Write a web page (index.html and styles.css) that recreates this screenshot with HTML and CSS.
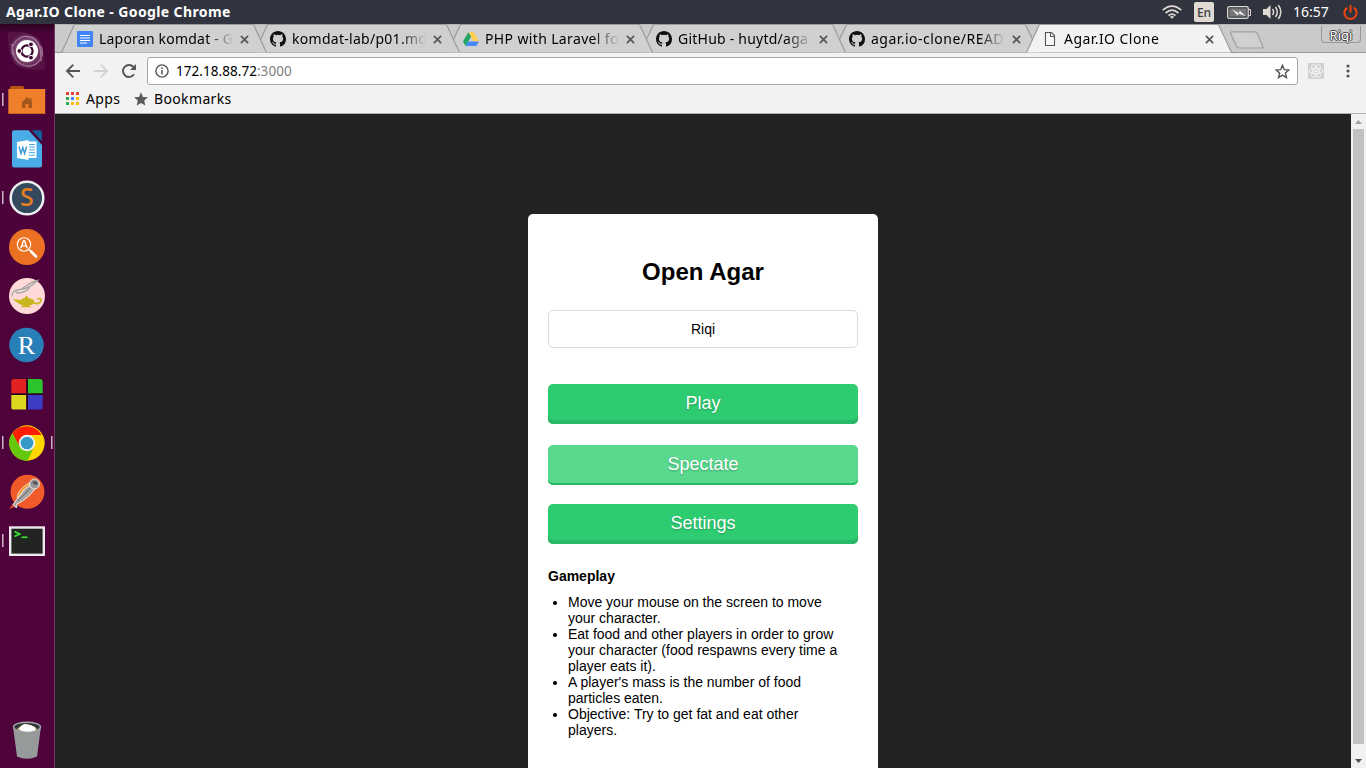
FILE: index.html
```html
<!DOCTYPE html>
<html lang="en">
<head>
<meta charset="utf-8">
<title>Agar.IO Clone</title>
<link rel="stylesheet" href="styles.css">
</head>
<body>
<svg class="defs" width="0" height="0">
  <symbol id="github" viewBox="0 0 16 16"><path fill="#111" d="M8 0C3.58 0 0 3.58 0 8c0 3.54 2.29 6.53 5.47 7.59.4.07.55-.17.55-.38 0-.19-.01-.82-.01-1.49-2.01.37-2.53-.49-2.69-.94-.09-.23-.48-.94-.82-1.13-.28-.15-.68-.52-.01-.53.63-.01 1.08.58 1.23.82.72 1.21 1.87.87 2.33.66.07-.52.28-.87.51-1.07-1.78-.2-3.64-.89-3.64-3.95 0-.87.31-1.59.82-2.15-.08-.2-.36-1.02.08-2.12 0 0 .67-.21 2.2.82a7.6 7.6 0 0 1 4 0c1.53-1.04 2.2-.82 2.2-.82.44 1.1.16 1.92.08 2.12.51.56.82 1.27.82 2.15 0 3.07-1.87 3.75-3.65 3.95.29.25.54.73.54 1.48 0 1.07-.01 1.93-.01 2.2 0 .21.15.46.55.38A8 8 0 0 0 16 8c0-4.42-3.58-8-8-8z"/></symbol>
  <symbol id="close" viewBox="0 0 9 9"><path d="M.9.9l7.2 7.2M8.1.9L.9 8.1" stroke="#555" stroke-width="1.7"/></symbol>
  <symbol id="tab" viewBox="0 0 206 29"><path d="M.5 28.5L13.5.5H192.500L205.500 28.500" stroke="#999" stroke-width="1.1"/></symbol>
</svg>

<header class="panel">
  <span class="panel-title">Agar.IO Clone - Google Chrome</span>
  <svg class="ind wifi" width="20" height="14" viewBox="0 0 20 14" fill="none" stroke="#dfdbd2" stroke-width="1.7"><path d="M.7 5.200Q10-3 19.300 5.200M3.600 8Q10 2.400 16.400 8M6.500 10.600Q10 7.600 13.500 10.600"/><path d="M7.800 11.700Q10 10.200 12.200 11.700L10 13.800z" fill="#dfdbd2" stroke="none"/></svg>
  <span class="lang">En</span>
  <svg class="ind battery" width="24" height="13" viewBox="0 0 24 13"><rect x=".7" y=".7" width="20.500" height="11.600" rx="1.500" fill="none" stroke="#dfdbd2" stroke-width="1.300"/><rect x="2.300" y="2.300" width="17.400" height="8.400" fill="#77777b"/><path d="M21.500 3.500h2v6h-2" fill="none" stroke="#dfdbd2"/><path d="M5 3.200L12 7.200 12.700 4.600 18.500 10 11.500 7.600 10.500 9.600z" fill="#f4f1ea"/></svg>
  <svg class="ind sound" width="19" height="16" viewBox="0 0 19 16"><path d="M0 5h3.500L7.500 1v14L3.500 11H0z" fill="#dfdbd2"/><path d="M9.500 5q2.200 3 0 6M12.500 3q3.500 5 0 10M15.300 1q5 7 0 14" fill="none" stroke="#dfdbd2" stroke-width="1.500"/></svg>
  <span class="clock">16:57</span>
  <svg class="ind power" width="15" height="15" viewBox="0 0 15 15" fill="none" stroke="#f0440c" stroke-width="2"><path d="M4.300 2.700a6.100 6.100 0 1 0 6.400 0M7.500 0v7.500"/></svg>
</header>

<div class="desktop">
  <nav class="launcher">
    <svg class="app" viewBox="0 0 54 49"><defs><radialGradient id="sw"><stop offset=".45" stop-color="#c9aec4"/><stop offset="1" stop-color="#6d3a62" stop-opacity=".5"/></radialGradient></defs><path d="M8 6Q24 4 38 12Q45 22 45 43Q30 46 16 39Q7 28 8 6z" fill="url(#sw)" opacity=".55"/><path d="M13 29A14 14 0 0 1 30 11Q42 14 41 35M41 20A14 14 0 0 1 23 39Q13 36 12 18" fill="none" stroke="#c9a9c2" stroke-width="1.300" opacity=".6"/><circle cx="27" cy="25" r="11" fill="#fff"/><circle cx="27" cy="25" r="5.600" fill="none" stroke="#3d0630" stroke-width="2.300"/><g stroke="#fff" stroke-width="1" fill="#3d0630"><circle cx="19.300" cy="25" r="2.400"/><circle cx="31" cy="18.300" r="2.400"/><circle cx="31" cy="31.700" r="2.400"/></g></svg>
    <svg class="app" viewBox="0 0 54 49"><path d="M2 18h1.500v13H2z" fill="#c9b8c4"/><path d="M10 14v-1.500q0-1.500 1.500-1.500H22.500q1.500 0 1.500 1.500V14z" fill="#b8540f"/><path d="M8.300 14H45.200V38.600H8.300z" fill="#f07f2c"/><path d="M8.300 38H45.200V39H8.300z" fill="#ca641a"/><path d="M21 28L27 22l2.800 2.700V23h1.700v3.300L33 28h-1v5H28.500V29h-3v4H22V28z" fill="#a3571c"/></svg>
    <svg class="app" viewBox="0 0 54 49"><path d="M14.500 6.300H28.500L42 21V41q0 2.500-2.500 2.500h-25Q12 43.500 12 41V8.800q0-2.500 2.500-2.500z" fill="#4aade8"/><path d="M32 6.300H39.500Q42 6.300 42 8.500V17.500z" fill="#145f9c"/><path d="M27.500 17.500H36.500V34H27.500z" fill="#fff"/><path d="M29 20.500h6M29 23.200h6M29 25.900h6M29 28.600h6M29 31.200h6" stroke="#4aade8" stroke-width="1"/><path d="M17 18L28.500 16V36L17 34z" fill="#fff"/><path d="M19 22.500L21 29.500 22.800 23.500 24.600 29.500 26.600 22.500" fill="none" stroke="#379bd8" stroke-width="1.400"/></svg>
    <svg class="app" viewBox="0 0 54 49"><path d="M2 18h1.500v13H2z" fill="#c9b8c4"/><circle cx="27" cy="25" r="16.300" fill="#34495e" stroke="#edf0f1" stroke-width="2.500"/><text x="27" y="33" class="sublime">S</text></svg>
    <svg class="app" viewBox="0 0 54 49"><circle cx="27" cy="25" r="18" fill="#eb7222"/><circle cx="24" cy="22.500" r="6.700" fill="none" stroke="#fff" stroke-width="1.100"/><path d="M29 27.500L31 29.500" stroke="#fff" stroke-width="1.200"/><path d="M31 29.500L36 34.500" stroke="#fff" stroke-width="2.600" stroke-linecap="round"/><path d="M20.800 26.200L23.500 18.700h1L27.200 26.200M21.800 23.800h4.400" fill="none" stroke="#fff" stroke-width="1.300"/></svg>
    <svg class="app" viewBox="0 0 54 49"><circle cx="27" cy="25" r="18" fill="#ffd9d8"/><path d="M12 25.500Q11.500 19 20 18.500T37.500 9.500Q32 10.500 26 15T14 20.500M16 22Q25 22 28 18T34 13" fill="none" stroke="#a8a9a7" stroke-width="1.300"/><path d="M12.500 28Q17 28.500 20 29Q23.500 27.300 25 26.800Q25 25 26.500 25T28 26.800Q32.500 28 34 29Q35 34 28.500 34.500L32 36.300H20L23.500 34.500Q19 33.500 12.500 28z" fill="#c9b51d"/><path d="M33 31.500Q40 34.500 41 29.500Q41 26.500 37 28" fill="none" stroke="#c9b51d" stroke-width="1.700"/></svg>
    <svg class="app" viewBox="0 0 54 49"><circle cx="26.500" cy="25" r="17.300" fill="#2980b9"/><text x="26.300" y="34.300" class="rstudio">R</text></svg>
    <svg class="app" viewBox="0 0 54 49"><path d="M14 10H26.300V24.500H11.300V13Q11.300 10 14 10z" fill="#e12222"/><path d="M28 10H40Q42.700 10 42.700 13V24.500H28z" fill="#2bc42a"/><path d="M11.300 26H26.300V40.600H14Q11.300 40.600 11.300 38z" fill="#ded71f"/><path d="M28 26H42.700V38Q42.700 40.600 40 40.600H28z" fill="#3c3cc4"/><path d="M27.100 10V40.600M11.300 25.300H42.700" stroke="#25041e" stroke-width="1.500"/></svg>
    <svg class="app" viewBox="0 0 54 49"><path d="M2 18h1.500v13H2zM51 18h1.500v13H51z" fill="#c9b8c4"/><circle cx="27" cy="25" r="17.700" fill="#ffd600"/><path d="M27 25L19.500 29 12.300 15.200A17.700 17.700 0 0 1 41.700 17H27z" fill="#fb1d04"/><path d="M12.300 15.200L20 29 27 25 34 29 27.500 42.700A17.700 17.700 0 0 1 12.300 15.200z" fill="#64c80c"/><circle cx="27" cy="25" r="7.300" fill="#3498c8" stroke="#f1f1f1" stroke-width="1.900"/></svg>
    <svg class="app" viewBox="0 0 54 49"><circle cx="27.500" cy="24.700" r="17" fill="#f15a29"/><path d="M9 42L15 34.500 16 39.500z" fill="#dd4c20"/><path d="M17 31Q18 22 29 16L32 20 19 32z" fill="#f7992d" stroke="#eee" stroke-width=".8"/><path d="M32 17.500Q24 21 21 27L13 37.500 16.500 41 17 37Q29 31 35.500 21z" fill="#a5a5a3" stroke="#f4f0ed" stroke-width="1"/><path d="M30 21Q25 28 17 34" fill="none" stroke="#666" stroke-width="1"/><circle cx="34.500" cy="17" r="5" fill="#999" stroke="#f4f0ed" stroke-width=".9"/><path d="M32 15q4-3 6 2l-3 1z" fill="#555"/></svg>
    <svg class="app" viewBox="0 0 54 49"><path d="M2 18h1.500v13H2z" fill="#c9b8c4"/><rect x="10.200" y="11.500" width="33.600" height="27.300" fill="#222421" stroke="#eee9ee" stroke-width="2.400"/><path d="M14.500 15.500L19.500 18 14.500 20.500" fill="none" stroke="#38e22e" stroke-width="1.900"/><path d="M21.500 21.300H27.500" stroke="#38e22e" stroke-width="1.700"/></svg>
    <svg class="trash" viewBox="0 0 54 49"><path d="M13 9.500L17 39.500Q27 44 37 39.500L41 9.500z" fill="#969a9a"/><ellipse cx="27" cy="10" rx="13.500" ry="4.800" fill="#333838" stroke="#a3a7a7" stroke-width="1.400"/><path d="M17 12l4-3 5-2 9 3 2 2q-9 4.500-20 0z" fill="#e5cf8b"/><path d="M19 13l2-4 3-2 4 .5 4 1 3 2 .5 3q-8 2.500-16.500-.5z" fill="#fff"/></svg>
  </nav>

  <main class="browser">
    <div class="tabstrip">
      <div class="tab t1"><svg class="shape" fill="#d0d0d0"><use href="#tab"/></svg><svg class="fav" viewBox="0 0 16 16"><rect width="16" height="16" rx="1" fill="#4285f4"/><path d="M3 4.500h10M3 7h10M3 9.500h10M3 12h7" stroke="#fff" stroke-width="1.100"/></svg><span class="label">Laporan komdat - G</span><svg class="x"><use href="#close"/></svg></div>
      <div class="tab t2"><svg class="shape" fill="#d0d0d0"><use href="#tab"/></svg><svg class="fav"><use href="#github"/></svg><span class="label">komdat-lab/p01.md</span><svg class="x"><use href="#close"/></svg></div>
      <div class="tab t3"><svg class="shape" fill="#d0d0d0"><use href="#tab"/></svg><svg class="fav" viewBox="0 0 16 16"><path d="M5.400 1.300h5.200L16 10.500h-5.200z" fill="#ffcf48"/><path d="M5.400 1.300L0 10.500 2.700 15 8 5.800z" fill="#1fa463"/><path d="M5.300 10.500H16L13.300 15H2.700z" fill="#4688f4"/></svg><span class="label">PHP with Laravel fo</span><svg class="x"><use href="#close"/></svg></div>
      <div class="tab t4"><svg class="shape" fill="#d0d0d0"><use href="#tab"/></svg><svg class="fav"><use href="#github"/></svg><span class="label">GitHub - huytd/aga</span><svg class="x"><use href="#close"/></svg></div>
      <div class="tab t5"><svg class="shape" fill="#d0d0d0"><use href="#tab"/></svg><svg class="fav"><use href="#github"/></svg><span class="label">agar.io-clone/READ</span><svg class="x"><use href="#close"/></svg></div>
      <div class="tab active"><svg class="shape" fill="#f2f2f2"><use href="#tab"/></svg><svg class="fav" viewBox="0 0 16 16"><path d="M3.500 1.500h6l3 3v10h-9zM8.500 1.500v4h4" fill="#f8f8f8" stroke="#555" stroke-width="1.100"/></svg><span class="label">Agar.IO Clone</span><svg class="x"><use href="#close"/></svg></div>
      <svg class="newtab" width="36" height="19" viewBox="0 0 36 19"><path d="M3 .8H25.500Q27.500.8 28.300 2.500L34 15.500Q34.500 17 33 17H10.500Q8.500 17 7.700 15.500L1.700 2.500Q1.200.8 3 .8z" fill="#d0d0d0" stroke="#a0a0a0" stroke-width="1.200"/></svg>
      <span class="profile">Riqi</span>
    </div>
    <div class="toolbar">
      <svg class="nav" viewBox="0 0 16 16"><path d="M15 8H2.500M8.300 1.700L2 8l6.300 6.300" fill="none" stroke="#555" stroke-width="1.900"/></svg>
      <svg class="nav" viewBox="0 0 16 16"><path d="M1 8H13.500M7.700 1.700L14 8l-6.300 6.300" fill="none" stroke="#d2d2d2" stroke-width="1.900"/></svg>
      <svg class="nav" viewBox="0 0 16 16"><path d="M13 11.300A6 6 0 1 1 12.500 4" fill="none" stroke="#555" stroke-width="1.900"/><path d="M15 1V7H9z" fill="#555"/></svg>
      <div class="omnibox">
        <svg class="info" viewBox="0 0 14 14"><circle cx="7" cy="7" r="6.100" fill="none" stroke="#555" stroke-width="1.400"/><path d="M7 6v4.500M7 3.300v1.600" stroke="#555" stroke-width="1.500"/></svg>
        <span class="url">172.18.88.72<span class="port">:3000</span></span>
        <svg class="star" viewBox="0 0 14 14"><path d="M7 1.200L8.700 5.300 13 5.600 9.700 8.400 10.700 12.700 7 10.400 3.300 12.700 4.300 8.400 1 5.600 5.300 5.300z" fill="none" stroke="#555" stroke-width="1.300"/></svg>
      </div>
      <svg class="react" viewBox="0 0 16 16"><path d="M0 0h16v16H0z" fill="#d0d0d0"/><g fill="none" stroke="#f3f3f3" stroke-width="1"><ellipse cx="8" cy="8" rx="7" ry="2.700"/><ellipse cx="8" cy="8" rx="7" ry="2.700" transform="rotate(60 8 8)"/><ellipse cx="8" cy="8" rx="7" ry="2.700" transform="rotate(120 8 8)"/></g><circle cx="8" cy="8" r="1.400" fill="#f3f3f3"/></svg>
      <svg class="dots" viewBox="0 0 4 14" fill="#555"><circle cx="2" cy="2" r="1.600"/><circle cx="2" cy="7" r="1.600"/><circle cx="2" cy="12" r="1.600"/></svg>
    </div>
    <div class="bookmarks">
      <svg class="grid" viewBox="0 0 13 13"><path d="M0 0h3v3H0zM5 0h3v3H5zM10 0h3v3h-3z" fill="#ea4335"/><path d="M0 5h3v3H0z" fill="#34a853"/><path d="M5 5h3v3H5z" fill="#4285f4"/><path d="M10 5h3v3h-3z" fill="#fbbc05"/><path d="M0 10h3v3H0z" fill="#34a853"/><path d="M5 10h3v3H5zM10 10h3v3h-3z" fill="#fbbc05"/></svg>
      <span class="bm apps">Apps</span>
      <svg class="bstar" viewBox="0 0 14 14"><path d="M7 .2L9 4.900 14 5.300 10.200 8.600 11.300 13.600 7 11 2.700 13.600 3.800 8.600 0 5.300 5 4.900z" fill="#5a5a5a"/></svg>
      <span class="bm marks">Bookmarks</span>
    </div>
    <div class="viewport">
      <section class="page">
        <div class="menu">
          <h2>Open Agar</h2>
          <div class="name">Riqi</div>
          <div class="btn play">Play</div>
          <div class="btn spectate">Spectate</div>
          <div class="btn settings">Settings</div>
          <h3>Gameplay</h3>
          <ul>
            <li>Move your mouse on the screen to move your character.</li>
            <li>Eat food and other players in order to grow your character (food respawns every time a player eats it).</li>
            <li>A player's mass is the number of food particles eaten.</li>
            <li>Objective: Try to get fat and eat other players.</li>
          </ul>
        </div>
      </section>
      <div class="scrollbar">
        <svg viewBox="0 0 15 15"><path d="M4 10L7.500 6 11 10z" fill="#a3a3a3"/></svg>
        <div class="thumb"></div>
        <svg viewBox="0 0 15 15"><path d="M4 6L7.500 10 11 6z" fill="#505050"/></svg>
      </div>
    </div>
  </main>
</div>
</body>
</html>
```
FILE: styles.css
```css
* { box-sizing: border-box; }
body { margin: 0; width: 1366px; height: 768px; overflow: hidden; font-family: "Noto Sans", "Open Sans", sans-serif; }
svg { display: block; flex: none; }
.defs { position: absolute; }

.panel { height: 24px; background: #31343f; display: flex; align-items: center; padding: 0 8px 0 6px; color: #fff; }
.panel-title { flex: 1; font-size: 14px; font-weight: 700; line-height: 24px; letter-spacing: .38px; white-space: nowrap; }
.lang { width: 20px; height: 20px; margin: 0 13px 0 12px; border-radius: 2px; background: #dfdbd2; color: #3c3b42; font-size: 12px; font-weight: 500; line-height: 21px; text-align: center; }
.sound { margin-left: 12px; }
.clock { margin: 0 14px 0 11px; width: 36px; font-size: 14px; line-height: 24px; }

.desktop { display: flex; height: 744px; }
.launcher { width: 55px; padding-top: 2px; border-right: 1px solid #6a3a5f; background: linear-gradient(#2c0321 0, #4c0339 10px, #4f033b 100%); display: flex; flex-direction: column; }
.app, .trash { width: 54px; height: 49px; }
.trash { margin-top: auto; margin-bottom: 2px; }
.sublime { font: 500 25px "Noto Sans", sans-serif; fill: #e67e22; text-anchor: middle; }
.rstudio { font: 26px "Liberation Serif", serif; fill: #fff; text-anchor: middle; }

.browser { flex: 1; display: flex; flex-direction: column; background: #f2f2f2; }
.tabstrip { height: 29px; padding-left: 6px; background: #cacaca; border-top: 1px solid #b5b5b5; border-bottom: 1px solid #999; display: flex; isolation: isolate; }
.tab { position: relative; isolation: isolate; flex: none; width: 206px; height: 29px; margin: -1px -13px 0 0; padding: 0 17px 0 16px; display: flex; align-items: center; }
.t1 { z-index: 5; letter-spacing: .21px; }
.t2 { z-index: 4; letter-spacing: .28px; }
.t3 { z-index: 3; letter-spacing: .36px; }
.t4 { z-index: 2; letter-spacing: .23px; }
.t5 { z-index: 1; letter-spacing: .48px; }
.active { z-index: 6; letter-spacing: .44px; }
.shape { position: absolute; left: 0; top: 0; width: 206px; height: 29px; z-index: -1; }
.fav { width: 16px; height: 16px; margin-top: 1px; }
.label { width: 136px; margin: 0 4.5px 0 6px; white-space: nowrap; font-size: 14px; line-height: 29px; color: #000; -webkit-mask-image: linear-gradient(90deg, #000 108px, transparent 134px); mask-image: linear-gradient(90deg, #000 108px, transparent 134px); }
.x { width: 9px; height: 9px; margin-top: 1px; }
.newtab { margin: 6px 0 0 10px; }
.profile { margin: 1px 5px 0 auto; width: 40px; height: 17px; border: 1px solid #999; border-top: 0; border-radius: 0 0 4px 4px; color: #fff; font-size: 13px; line-height: 19px; text-align: center; text-shadow: 1px 0 #444, -1px 0 #444, 0 1px #444, 0 -1px #444; }

.toolbar { height: 36px; padding: 0 16px 0 10px; display: flex; align-items: center; }
.nav { width: 16px; height: 16px; margin-right: 12px; }
.omnibox { flex: 1; margin-left: -2px; height: 28px; border: 1px solid #a6a6a6; border-radius: 3px; background: #fff; display: flex; align-items: center; padding: 0 7px; }
.info { width: 14px; height: 14px; }
.url { flex: 1; margin-left: 7px; font-size: 13.500px; letter-spacing: .05px; color: #000; }
.port { color: #808080; }
.star { width: 15px; height: 15px; }
.react { width: 16px; height: 16px; margin: 0 22px 0 10px; }
.dots { width: 4px; height: 14px; }
.bookmarks { height: 25px; padding-left: 11px; border-bottom: 1px solid #b0b0b0; display: flex; align-items: center; font-size: 14px; padding-bottom: 5px; }
.grid { width: 13px; height: 13px; }
.bstar { width: 14px; height: 14px; }
.bm { line-height: 20px; letter-spacing: .36px; }
.apps { width: 48px; margin-left: 7px; }
.marks { margin-left: 6px; }

.viewport { flex: 1; display: flex; min-height: 0; }
.page { flex: 1; background: #222; padding-top: 100px; overflow: hidden; }
.menu { width: 350px; height: 600px; margin: 0 auto; padding: 44px 20px 0; border-radius: 5px; background: #fff; color: #000; font: 14px/16px "Liberation Sans", Arial, sans-serif; }
.menu h2 { margin: 0 0 24px; font-size: 24px; line-height: 28px; text-align: center; }
.name { height: 38px; border: 1px solid #dcdcdc; border-radius: 5px; text-align: center; line-height: 36px; }
.btn { height: 40px; border-radius: 5px; background: #2ecc71; color: #fff; font-size: 18px; line-height: 38px; text-align: center; text-shadow: 0 1px 2px rgba(0, 0, 0, .25); box-shadow: inset 0 -4px #29b865; }
.play { margin-top: 36px; }
.spectate { margin-top: 21px; background: #58d98d; box-shadow: inset 0 -2px #2abb67; }
.settings { margin-top: 19px; }
.menu h3 { margin: 24px 0 10px; font-size: 14px; line-height: 16px; }
.menu ul { margin: 0; padding: 0 20px; }

.scrollbar { width: 15px; background: #f1f1f1; }
.scrollbar svg { width: 15px; height: 15px; }
.thumb { height: 615px; margin: 0 2px; background: #c1c1c1; }
.scrollbar svg:last-child { margin-top: 9px; }
```
